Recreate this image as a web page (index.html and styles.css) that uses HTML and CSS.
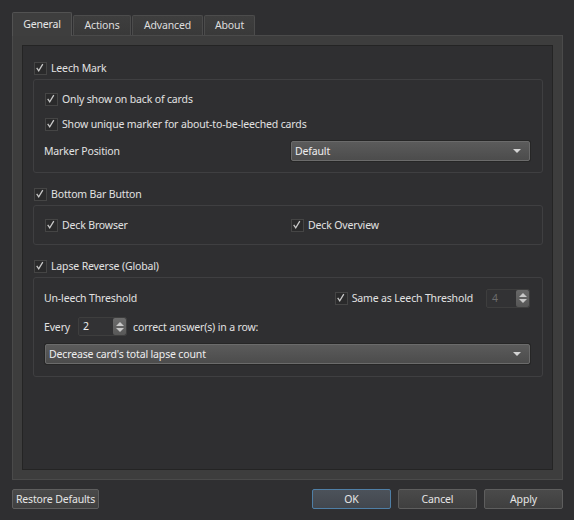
FILE: index.html
```html
<!DOCTYPE html>
<html>
<head>
<meta charset="utf-8">
<link rel="stylesheet" href="styles.css">
</head>
<body>
<div class="dialog">
  <div class="tabs">
    <div class="tab active t-general">General</div>
    <div class="tab t-actions">Actions</div>
    <div class="tab t-advanced">Advanced</div>
    <div class="tab t-about">About</div>
  </div>
  <div class="pane">
    <div class="page">
      <div class="header cb"><span class="box"><svg viewBox="0 0 13 13"><path d="M3 6.8 L5.4 10.3 L10.2 2.3"/></svg></span><span>Leech Mark</span></div>
      <div class="group g1">
        <div class="row cb"><span class="box"><svg viewBox="0 0 13 13"><path d="M3 6.8 L5.4 10.3 L10.2 2.3"/></svg></span><span>Only show on back of cards</span></div>
        <div class="row cb r2"><span class="box"><svg viewBox="0 0 13 13"><path d="M3 6.8 L5.4 10.3 L10.2 2.3"/></svg></span><span>Show unique marker for about-to-be-leeched cards</span></div>
        <div class="split marker">
          <span class="lbl">Marker Position</span>
          <div class="combo"><span>Default</span><span class="arrow"></span></div>
        </div>
      </div>

      <div class="header cb h2"><span class="box"><svg viewBox="0 0 13 13"><path d="M3 6.8 L5.4 10.3 L10.2 2.3"/></svg></span><span>Bottom Bar Button</span></div>
      <div class="group g2">
        <div class="split">
          <div class="row cb"><span class="box"><svg viewBox="0 0 13 13"><path d="M3 6.8 L5.4 10.3 L10.2 2.3"/></svg></span><span>Deck Browser</span></div>
          <div class="row cb"><span class="box"><svg viewBox="0 0 13 13"><path d="M3 6.8 L5.4 10.3 L10.2 2.3"/></svg></span><span>Deck Overview</span></div>
        </div>
      </div>

      <div class="header cb h2"><span class="box"><svg viewBox="0 0 13 13"><path d="M3 6.8 L5.4 10.3 L10.2 2.3"/></svg></span><span>Lapse Reverse (Global)</span></div>
      <div class="group g3">
        <div class="line l1">
          <span class="lbl">Un-leech Threshold</span>
          <div class="right">
            <div class="row cb"><span class="box"><svg viewBox="0 0 13 13"><path d="M3 6.8 L5.4 10.3 L10.2 2.3"/></svg></span><span>Same as Leech Threshold</span></div>
            <div class="spin disabled s4"><span class="val">4</span><span class="btns"><span class="up"></span><span class="down"></span></span></div>
          </div>
        </div>
        <div class="line l2">
          <span class="lbl">Every</span>
          <div class="spin s2"><span class="val">2</span><span class="btns"><span class="up"></span><span class="down"></span></span></div>
          <span class="after">correct answer(s) in a row:</span>
        </div>
        <div class="combo wide"><span>Decrease card's total lapse count</span><span class="arrow"></span></div>
      </div>
    </div>
  </div>
  <div class="buttons">
    <div class="btn restore">Restore Defaults</div>
    <div class="spacer"></div>
    <div class="btn ok">OK</div>
    <div class="btn">Cancel</div>
    <div class="btn">Apply</div>
  </div>
</div>
</body>
</html>
```

FILE: styles.css
```css
html, body {
  margin: 0;
  padding: 0;
  background: #2f2f31;
}
body {
  width: 574px;
  height: 520px;
  overflow: hidden;
  font-family: "Noto Sans", "Open Sans", sans-serif;
  font-size: 10.5px;
  letter-spacing: -0.15px;
  color: #e2e2e2;
}
.dialog {
  padding: 12px 11px 0 12px;
}
.tabs {
  display: flex;
  align-items: flex-end;
  gap: 1px;
  height: 23px;
  position: relative;
  z-index: 2;
}
.tab {
  box-sizing: border-box;
  height: 20px;
  background: linear-gradient(#3e3e3e, #393939);
  border: 1px solid #4c4c4c;
  border-bottom: none;
  border-radius: 2px 2px 0 0;
  text-align: center;
  line-height: 19px;
  color: #dedede;
}
.tab.active {
  height: 24px;
  margin-bottom: -1px;
  background: #3e3e3e;
  border-color: #525252;
  line-height: 23px;
  padding-bottom: 1px;
  color: #e8e8e8;
}
.t-general { width: 60px; }
.t-actions { width: 58px; }
.t-advanced { width: 71px; }
.t-about { width: 51px; }

.pane {
  box-sizing: border-box;
  width: 551px;
  height: 445px;
  border: 1px solid #4a4a4a;
  background: #3d3d3d;
  padding: 9px;
  position: relative;
  z-index: 1;
}
.page {
  box-sizing: border-box;
  height: 100%;
  border: 1px solid #242424;
  background: #2f2f31;
  padding: 14px 9px 0 10px;
}

.cb {
  display: flex;
  align-items: center;
  height: 16px;
}
.box {
  box-sizing: border-box;
  width: 13px;
  height: 13px;
  border: 1px solid #454545;
  background: #2a2a2b;
  margin-right: 4px;
  flex: none;
  display: block;
}
.box svg {
  display: block;
  width: 11px;
  height: 11px;
}
.box path {
  fill: none;
  stroke: #c9c9c9;
  stroke-width: 1.5;
  transform: translate(-1px, -1px);
}
.header {
  padding-left: 1px;
}
.header.h2 {
  margin-top: 13px;
}
.group {
  box-sizing: border-box;
  margin-top: 3px;
  border: 1px solid #3f3f41;
  border-radius: 3px;
  padding: 11px 12px 11px 11px;
}
.g1 .r2 {
  margin-top: 9px;
}
.split {
  display: grid;
  grid-template-columns: 246px 1fr;
  align-items: center;
}
.marker {
  margin-top: 9px;
}
.lbl {
  margin-left: -1px;
}
.g2 {
  padding-top: 11px;
  padding-bottom: 11px;
}
.combo {
  box-sizing: border-box;
  height: 20px;
  border: 1px solid #6b6b6b;
  border-radius: 2px;
  background: linear-gradient(#5b5b5b, #4c4c4c);
  box-shadow: 0 0 0 1px #262626;
  display: flex;
  align-items: center;
  justify-content: space-between;
  padding: 0 8px 0 3px;
  color: #eeeeee;
}
.arrow {
  width: 0;
  height: 0;
  border-left: 4px solid transparent;
  border-right: 4px solid transparent;
  border-top: 4px solid #d4d4d4;
}
.g3 {
  padding-bottom: 12px;
}
.line {
  display: flex;
  align-items: center;
  height: 19px;
}
.l1 {
  height: 18px;
  justify-content: space-between;
}
.l2 {
  margin-top: 10px;
}
.right {
  display: flex;
  align-items: center;
}
.right .cb {
  margin-right: 13px;
}
.spin {
  box-sizing: border-box;
  height: 19px;
  border: 1px solid #3e3e3e;
  border-radius: 2px;
  background: #323234;
  display: flex;
  align-items: stretch;
}
.spin .val {
  flex: 1;
  padding-left: 4px;
  line-height: 17px;
  color: #eeeeee;
}
.spin.disabled .val {
  color: #6c6c6c;
  padding-left: 5px;
}
.s4 { width: 44px; }
.s2 { width: 49px; margin-left: 8px; margin-right: 6px; }
.btns {
  width: 13px;
  background: linear-gradient(#6c6c6c, #585858);
  border-radius: 2px;
  display: flex;
  flex-direction: column;
  align-items: center;
  justify-content: center;
  gap: 2px;
}
.spin.disabled .btns {
  background: linear-gradient(#686868, #565656);
}
.up {
  width: 0;
  height: 0;
  border-left: 4px solid transparent;
  border-right: 4px solid transparent;
  border-bottom: 4px solid #c8c8c8;
}
.down {
  width: 0;
  height: 0;
  border-left: 4px solid transparent;
  border-right: 4px solid transparent;
  border-top: 4px solid #c8c8c8;
}
.wide {
  margin-top: 8px;
}

.buttons {
  display: flex;
  margin-top: 9px;
  gap: 7px;
  width: 551px;
}
.spacer {
  flex: 1;
}
.btn {
  box-sizing: border-box;
  width: 79px;
  height: 20px;
  border: 1px solid #5e5e5e;
  border-radius: 2px;
  background: linear-gradient(#4a4a4a, #3f3f3f);
  text-align: center;
  line-height: 18px;
  color: #e6e6e6;
}
.btn.restore {
  width: 87px;
}
.btn.ok {
  border-color: #4f7fa6;
  background: linear-gradient(#4c525a, #42474e);
}
```
